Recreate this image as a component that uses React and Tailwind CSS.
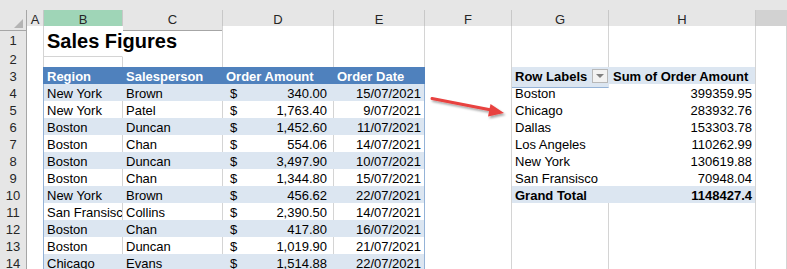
import React from "react";

const COLS =
  "grid grid-cols-[27px_17px_79px_100px_111px_91px_87px_97px_147px_1fr]";

const BASE =
  "border-r border-b flex items-center overflow-hidden whitespace-nowrap text-[13px] text-black";
const DEF = "bg-white border-r-[#d4d4d4] border-b-[#d4d4d4]";

function Cell({ cls = DEF, extra = "", children }) {
  return <div className={BASE + " " + cls + " " + extra}>{children}</div>;
}

function RowHead({ n }) {
  return (
    <div className="bg-[#e6e6e6] border-r border-b border-r-[#a6a6a6] border-b-[#d0d0d0] flex items-center justify-center text-[13px] text-[#262626]">
      {n}
    </div>
  );
}

const data = [
  ["New York", "Brown", "340.00", "15/07/2021"],
  ["New York", "Patel", "1,763.40", "9/07/2021"],
  ["Boston", "Duncan", "1,452.60", "11/07/2021"],
  ["Boston", "Chan", "554.06", "14/07/2021"],
  ["Boston", "Duncan", "3,497.90", "10/07/2021"],
  ["Boston", "Chan", "1,344.80", "15/07/2021"],
  ["New York", "Brown", "456.62", "22/07/2021"],
  ["San Fransisco", "Collins", "2,390.50", "14/07/2021"],
  ["Boston", "Chan", "417.80", "16/07/2021"],
  ["Boston", "Duncan", "1,019.90", "21/07/2021"],
  ["Chicago", "Evans", "1,514.88", "22/07/2021"],
];

const pivot = [
  ["Boston", "399359.95"],
  ["Chicago", "283932.76"],
  ["Dallas", "153303.78"],
  ["Los Angeles", "110262.99"],
  ["New York", "130619.88"],
  ["San Fransisco", "70948.04"],
  ["Grand Total", "1148427.4"],
];

function ColHead({ children, cls = "" }) {
  return (
    <div
      className={
        "border-r border-b border-r-[#c8c8c8] flex items-center justify-center text-[13px] text-[#262626] " +
        cls
      }
    >
      {children}
    </div>
  );
}

function TableRow({ r }) {
  const band = r % 2 === 0;
  const d = data[r - 4];
  const inner = band
    ? "bg-[#dce6f1] border-r-[#dce6f1] border-b-[#95b3d7]"
    : "bg-white border-r-[#d4d4d4] border-b-[#95b3d7]";
  const last = band
    ? "bg-[#dce6f1] border-r-[#95b3d7] border-b-[#95b3d7]"
    : "bg-white border-r-[#95b3d7] border-b-[#95b3d7]";
  const p = r <= 10 ? pivot[r - 4] : null;
  let gCls = DEF;
  let hCls = DEF;
  if (r < 9) {
    gCls = "bg-white border-r-white border-b-white";
    hCls = "bg-white border-r-[#d4d4d4] border-b-white";
  } else if (r === 9) {
    gCls = "bg-white border-r-white border-b-[#95b3d7]";
    hCls = "bg-white border-r-[#d4d4d4] border-b-[#95b3d7]";
  } else if (r === 10) {
    gCls = "bg-[#dce6f1] border-r-[#dce6f1] border-b-[#d4d4d4] font-bold";
    hCls = "bg-[#dce6f1] border-r-[#d4d4d4] border-b-[#d4d4d4] font-bold";
  }
  return (
    <div className={COLS + " h-[17px]"}>
      <RowHead n={r} />
      <Cell cls="bg-white border-r-[#95b3d7] border-b-[#d4d4d4]" />
      <Cell cls={inner} extra="pl-[3px]">{d[0]}</Cell>
      <Cell cls={inner} extra="pl-[3px]">{d[1]}</Cell>
      <Cell cls={inner} extra="justify-between pl-[7px] pr-[6px]">
        <span>$</span>
        <span>{d[2]}</span>
      </Cell>
      <Cell cls={last} extra="justify-end pr-[3px]">{d[3]}</Cell>
      <Cell />
      <Cell cls={gCls} extra="pl-[3px]">{p ? p[0] : null}</Cell>
      <Cell cls={hCls} extra="justify-end pr-[3px]">{p ? p[1] : null}</Cell>
      <Cell />
    </div>
  );
}

export default function App() {
  return (
    <div className="relative w-[787px] h-[269px] overflow-hidden bg-white font-['Liberation_Sans',Arial,sans-serif]">
      <div className="h-[10px] bg-[#e6e6e6]" />
      {/* column headers */}
      <div className={COLS + " h-[16px] bg-[#e6e6e6]"}>
        <div className="relative bg-[#e6e6e6] border-r border-b border-r-[#a6a6a6] border-b-[#a6a6a6]">
          <div className="absolute right-[3px] bottom-[2px] w-0 h-0 border-l-[9px] border-l-transparent border-b-[9px] border-b-[#b4b4b4]" />
        </div>
        <ColHead cls="bg-[#e6e6e6] border-b-[#a6a6a6]">A</ColHead>
        <ColHead cls="bg-[#9fd5b7] border-b-[#9fd5b7]">B</ColHead>
        <ColHead cls="bg-[#e6e6e6] border-b-[#a6a6a6]">C</ColHead>
        <ColHead cls="bg-[#e6e6e6] border-b-[#a6a6a6]">D</ColHead>
        <ColHead cls="bg-[#e6e6e6] border-b-[#a6a6a6]">E</ColHead>
        <ColHead cls="bg-[#e6e6e6] border-b-[#a6a6a6]">F</ColHead>
        <ColHead cls="bg-[#e6e6e6] border-b-[#a6a6a6]">G</ColHead>
        <ColHead cls="bg-[#e6e6e6] border-b-[#a6a6a6]">H</ColHead>
        <div className="bg-[#d2d2d2] border-b-2 border-b-[#217346]" />
      </div>
      {/* row 1 */}
      <div className={COLS + " h-[24px]"}>
        <RowHead n={1} />
        <Cell />
        <Cell cls="bg-white border-r-white border-b-[#d4d4d4]" extra="relative z-10 overflow-visible pl-[3px] text-[20px] font-bold">
          Sales Figures
        </Cell>
        <Cell cls="border-r-[#d4d4d4] border-b-[#d4d4d4]" />
        <Cell />
        <Cell />
        <Cell />
        <Cell />
        <Cell />
        <Cell />
      </div>
      {/* row 2 */}
      <div className={COLS + " h-[17px]"}>
        <RowHead n={2} />
        <Cell />
        <Cell />
        <Cell />
        <Cell />
        <Cell />
        <Cell />
        <Cell />
        <Cell />
        <Cell />
      </div>
      {/* row 3 */}
      <div className={COLS + " h-[17px]"}>
        <RowHead n={3} />
        <Cell cls="bg-white border-r-[#4f81bd] border-b-[#d4d4d4]" />
        <Cell cls="bg-[#4f81bd] border-r-[#4f81bd] border-b-[#4f81bd]" extra="pl-[3px] font-bold text-white">
          Region
        </Cell>
        <Cell cls="bg-[#4f81bd] border-r-[#4f81bd] border-b-[#4f81bd]" extra="pl-[3px] font-bold text-white">
          Salesperson
        </Cell>
        <Cell cls="bg-[#4f81bd] border-r-[#4f81bd] border-b-[#4f81bd]" extra="pl-[3px] font-bold text-white">
          Order Amount
        </Cell>
        <Cell cls="bg-[#4f81bd] border-r-[#4f81bd] border-b-[#4f81bd]" extra="pl-[3px] font-bold text-white">
          Order Date
        </Cell>
        <Cell />
        <Cell cls="bg-[#dce6f1] border-r-[#dce6f1] border-b-[#95b3d7]" extra="relative pl-[3px] font-bold">
          Row Labels
          <div className="absolute right-0 top-[2px] w-[16px] h-[14px] bg-[#f2f2f2] border border-[#b8b8b8] flex items-center justify-center">
            <div className="w-0 h-0 border-l-[4px] border-r-[4px] border-t-[4px] border-l-transparent border-r-transparent border-t-[#808080]" />
          </div>
        </Cell>
        <Cell cls="bg-[#dce6f1] border-r-[#d4d4d4] border-b-[#95b3d7]" extra="pl-[4px] font-bold">
          Sum of Order Amount
        </Cell>
        <Cell />
      </div>
      {[4, 5, 6, 7, 8, 9, 10, 11, 12, 13, 14].map((r) => (
        <TableRow key={r} r={r} />
      ))}

      {/* arrow */}
      <svg
        className="absolute left-0 top-0 pointer-events-none z-20"
        width="787"
        height="269"
        viewBox="0 0 787 269"
      >
        <defs>
          <filter id="sh" x="-20%" y="-50%" width="140%" height="200%">
            <feDropShadow dx="1.5" dy="2" stdDeviation="1.2" floodColor="#000" floodOpacity="0.35" />
          </filter>
        </defs>
        <g filter="url(#sh)">
          <line x1="432" y1="98.5" x2="490" y2="109.8" stroke="#e8423f" strokeWidth="3" strokeLinecap="round" />
          <polygon points="504,113 488,116.5 490.5,104" fill="#e8423f" />
        </g>
      </svg>
    </div>
  );
}
